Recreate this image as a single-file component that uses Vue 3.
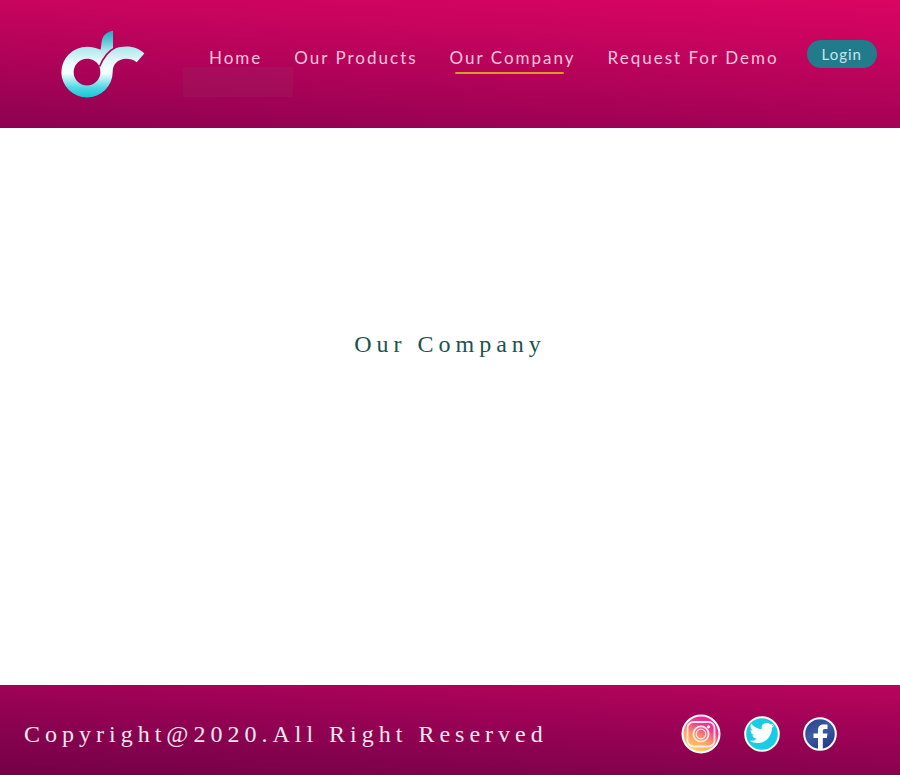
<script setup>
const links = [
  { label: 'Home', name: 'home' },
  { label: 'Our Products', name: 'products' },
  { label: 'Our Company', name: 'company', active: true },
  { label: 'Request For Demo', name: 'demo' },
]
</script>

<template>
  <div class="page">
    <header class="header">
      <a class="brand" href="#" aria-label="dr">
        <svg class="logo" viewBox="35 31 252 203" aria-hidden="true">
          <defs>
            <linearGradient id="leaf" x1="0" y1="31" x2="0" y2="112" gradientUnits="userSpaceOnUse">
              <stop offset="0" stop-color="#1daec4" />
              <stop offset="0.4" stop-color="#5cc6d3" />
              <stop offset="0.75" stop-color="#b0e6ec" />
              <stop offset="1" stop-color="#d6f4f7" />
            </linearGradient>
            <linearGradient id="body" x1="0" y1="80" x2="0" y2="234" gradientUnits="userSpaceOnUse">
              <stop offset="0" stop-color="#a9e6ec" />
              <stop offset="0.3" stop-color="#e6fafc" />
              <stop offset="0.52" stop-color="#f4ffff" />
              <stop offset="0.8" stop-color="#4fd9e4" />
              <stop offset="1" stop-color="#16c5d8" />
            </linearGradient>
            <mask id="gap" maskUnits="userSpaceOnUse" x="30" y="25" width="260" height="215">
              <rect x="30" y="25" width="260" height="215" fill="#fff" />
              <path d="M198 83 C176 94 163 110 151 140" fill="none" stroke="#000" stroke-width="5" />
            </mask>
          </defs>
          <g mask="url(#gap)">
            <path
              d="M113 81 C129 81 143 85 156 91 L164 108 C181 89 205 80 232 80 C253 80 271 87 285 101 L262 127 C252 119 242 117 231 117 C204 118 190 134 190 157 A77 76 0 1 1 113 81 Z M113 117 A40 40 0 1 0 153 157 C153 148 151 141 149 137 C141 124 128 117 113 117 Z"
              fill="url(#body)"
              fill-rule="evenodd"
            />
            <path d="M191 33 L191 88 C180 95 172 103 166 112 L150 89 L154 89 L156 74 C157 50 170 36 191 33 Z" fill="url(#leaf)" />
          </g>
        </svg>
      </a>
      <nav class="nav" aria-label="Main">
        <a
          v-for="link in links"
          :key="link.name"
          :class="['link', link.name, { active: link.active }]"
          :aria-current="link.active ? 'page' : undefined"
          href="#"
        >{{ link.label }}</a>
      </nav>
      <button class="login" type="button">Login</button>
    </header>

    <main class="main">
      <h1 class="title">Our Company</h1>
    </main>

    <footer class="footer">
      <p class="copyright">Copyright@2020.All Right Reserved</p>
      <div class="social">
        <a href="#" aria-label="Instagram">
          <svg class="instagram" viewBox="0 0 40 40" aria-hidden="true">
            <defs>
              <linearGradient id="insta" x1="0.2" y1="1" x2="0.7" y2="0">
                <stop offset="0" stop-color="#ffe05a" />
                <stop offset="0.4" stop-color="#fba065" />
                <stop offset="0.7" stop-color="#f03f87" />
                <stop offset="1" stop-color="#ee15a4" />
              </linearGradient>
            </defs>
            <circle cx="20" cy="20" r="18.5" fill="url(#insta)" stroke="#fff" stroke-width="2" />
            <g fill="none" stroke="#ffe9ee" stroke-width="1.8">
              <rect x="6.5" y="8" width="27" height="24.5" rx="6" />
              <circle cx="20" cy="20" r="7.6" />
              <circle cx="20" cy="20" r="4.8" stroke-width="1.2" />
            </g>
            <circle cx="27.5" cy="12.8" r="1.6" fill="#fff" />
          </svg>
        </a>
        <a href="#" aria-label="Twitter">
          <svg class="twitter" viewBox="0 0 36 36" aria-hidden="true">
            <circle cx="18" cy="18" r="16.8" fill="#18cbe6" stroke="#fff" stroke-width="2" />
            <path
              transform="translate(5.5 4.5) scale(1.04)"
              fill="#fff"
              d="M24 4.600a10 10 0 0 1-2.800.8 5 5 0 0 0 2.100-2.700 10 10 0 0 1-3.100 1.200 4.900 4.900 0 0 0-8.400 4.500A14 14 0 0 1 1.700 3.200a4.900 4.900 0 0 0 1.500 6.500 5 5 0 0 1-2.200-.6 4.900 4.900 0 0 0 3.900 4.900 5 5 0 0 1-2.200.1 4.900 4.900 0 0 0 4.600 3.400A9.900 9.900 0 0 1 0 19.500a14 14 0 0 0 7.500 2.200c9.100 0 14.300-7.700 14-14.600A10 10 0 0 0 24 4.600z"
            />
          </svg>
        </a>
        <a href="#" aria-label="Facebook">
          <svg class="facebook" viewBox="0 0 34 34" aria-hidden="true">
            <defs>
              <linearGradient id="fb" x1="0" y1="0" x2="0.6" y2="1">
                <stop offset="0" stop-color="#263d86" />
                <stop offset="0.5" stop-color="#3d5aa5" />
                <stop offset="1" stop-color="#263d86" />
              </linearGradient>
            </defs>
            <circle cx="17" cy="17" r="15.8" fill="url(#fb)" stroke="#fff" stroke-width="2" />
            <path
              fill="#fff"
              d="M15 32V21H10.500V16.500H15V13C15 9.500 17.200 7.500 20.500 7.500H24.500V12H22C20.300 12 19.800 12.700 19.800 14V16.500H24.500L23.800 21H19.800V32Z"
            />
          </svg>
        </a>
      </div>
    </footer>
  </div>
</template>

<style>
body {
  margin: 0;
}
</style>

<style scoped>
.page {
  display: flex;
  flex-direction: column;
  min-height: 100vh;
  background: #fff;
  font-family: Lato, 'Open Sans', sans-serif;
}

.header {
  box-sizing: border-box;
  display: flex;
  align-items: flex-start;
  min-height: 128px;
  padding: 30px 23px 30px 61px;
  background: linear-gradient(183deg, #da0463 0%, #c8045e 27%, #a40256 73%, #8c0250 100%);
}

.brand,
.social a {
  display: block;
}

.logo {
  display: block;
  width: 84px;
  height: 68px;
}

.nav {
  flex: 1;
  display: flex;
  justify-content: space-between;
  padding: 16px 28px 0 64px;
}

.link {
  position: relative;
  color: #f7c6dc;
  font-size: 17px;
  line-height: 24px;
  letter-spacing: 2px;
  text-decoration: none;
  white-space: nowrap;
}

.home::after {
  content: '';
  position: absolute;
  top: 21px;
  left: -26px;
  width: 110px;
  height: 30px;
  background: rgba(150, 50, 100, 0.22);
}

.active::after {
  content: '';
  position: absolute;
  top: 26px;
  left: 5px;
  right: 12px;
  height: 2px;
  border-radius: 1px;
  background: #dd9a26;
}

.login {
  margin-top: 10px;
  padding: 0 15px;
  border: 0;
  border-radius: 14px;
  background: #217b8b;
  color: #c5e6ec;
  font-family: inherit;
  font-size: 15px;
  line-height: 28px;
  letter-spacing: 1px;
}

.main {
  flex: 1;
  padding: 200px 24px 0;
}

.title {
  margin: 0;
  color: #1b5350;
  font-family: 'Liberation Serif', serif;
  font-size: 24px;
  font-weight: 400;
  line-height: 32px;
  letter-spacing: 5px;
  text-align: center;
}

.footer {
  box-sizing: border-box;
  display: flex;
  align-items: center;
  justify-content: space-between;
  min-height: 90px;
  padding: 16px 63px 8px 24px;
  background: linear-gradient(183deg, #b8055c 0%, #a00256 34%, #88024f 66%, #740048 100%);
}

.copyright {
  margin: 0;
  color: #f4e6ee;
  font-family: 'Liberation Serif', serif;
  font-size: 24px;
  line-height: 32px;
  letter-spacing: 5px;
}

.social {
  display: flex;
  align-items: center;
  gap: 23px;
}

.social svg {
  display: block;
}

.instagram {
  width: 40px;
  height: 40px;
}

.twitter {
  width: 36px;
  height: 36px;
}

.facebook {
  width: 34px;
  height: 34px;
}
</style>
